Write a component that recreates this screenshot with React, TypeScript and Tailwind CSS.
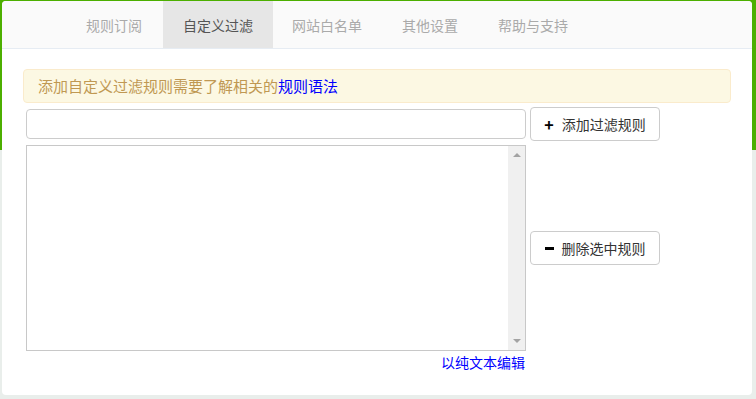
const tabs = ["规则订阅", "自定义过滤", "网站白名单", "其他设置", "帮助与支持"]

const font = "font-['Noto_Sans_CJK_SC','Liberation_Sans',sans-serif]"

export default function App() {
  return (
    <div className={`w-[756px] h-[399px] overflow-hidden pt-[1px] pl-[2px] bg-[linear-gradient(to_bottom,#4caf00_0,#4caf00_150px,#e9eeeb_150px)] ${font}`}>
      <div className="w-[750px] h-[394px] bg-white rounded-[4px] overflow-hidden">
        {/* Tab bar */}
        <div className="h-[48px] bg-[#fafafa] border-b border-[#e6ecf3] flex pl-[64px]">
          {tabs.map((tab, i) => (
            <div
              key={tab}
              className={`h-[47px] px-[20px] flex items-center text-[14px] leading-none ${i === 1 ? "bg-[#e6e6e6] text-[#555] ml-[1px] -mr-[1px]" : "text-[#aaa]"}`}
            >
              {tab}
            </div>
          ))}
        </div>

        <div className="px-[21px] pt-[20px]">
          {/* Alert */}
          <div className="h-[34px] w-[708px] flex items-center px-[14px] bg-[#fcf8e3] border border-[#faebcc] rounded-[4px] text-[15px] text-[#c09853]">
            添加自定义过滤规则需要了解相关的<span className="text-[#0000ff]">规则语法</span>
          </div>

          <div className="pl-[3px] mt-[4px]">
            {/* Input row */}
            <div className="flex items-center gap-[4px]">
              <div className="w-[500px] h-[30px] border border-[#ccc] rounded-[4px] bg-white" />
              <button className="w-[130px] h-[34px] border border-[#ccc] rounded-[4px] bg-white flex items-center justify-center gap-[8px] text-[14px] text-[#333]">
                <span className="text-[16px] font-bold text-black leading-none">+</span>
                添加过滤规则
              </button>
            </div>

            {/* Rule list */}
            <div className="flex items-center gap-[4px] mt-[4px]">
              <div className="w-[500px] h-[206px] border border-[#c8c8c8] bg-white flex justify-end">
                <div className="w-[17px] h-full bg-[#f0f0f0] flex flex-col items-center justify-between py-[7px]">
                  <div className="w-0 h-0 border-x-[4px] border-x-transparent border-b-[4px] border-b-[#a3a3a3]" />
                  <div className="w-0 h-0 border-x-[4px] border-x-transparent border-t-[4px] border-t-[#a3a3a3]" />
                </div>
              </div>
              <button className="w-[130px] h-[34px] border border-[#ccc] rounded-[4px] bg-white flex items-center justify-center gap-[8px] text-[14px] text-[#333]">
                <span className="w-[9px] h-[3px] bg-black" />
                删除选中规则
              </button>
            </div>

            <div className="w-[499px] text-right text-[14px] text-[#0000ff] leading-[20px] mt-[1px]">
              以纯文本编辑
            </div>
          </div>
        </div>
      </div>
    </div>
  )
}
